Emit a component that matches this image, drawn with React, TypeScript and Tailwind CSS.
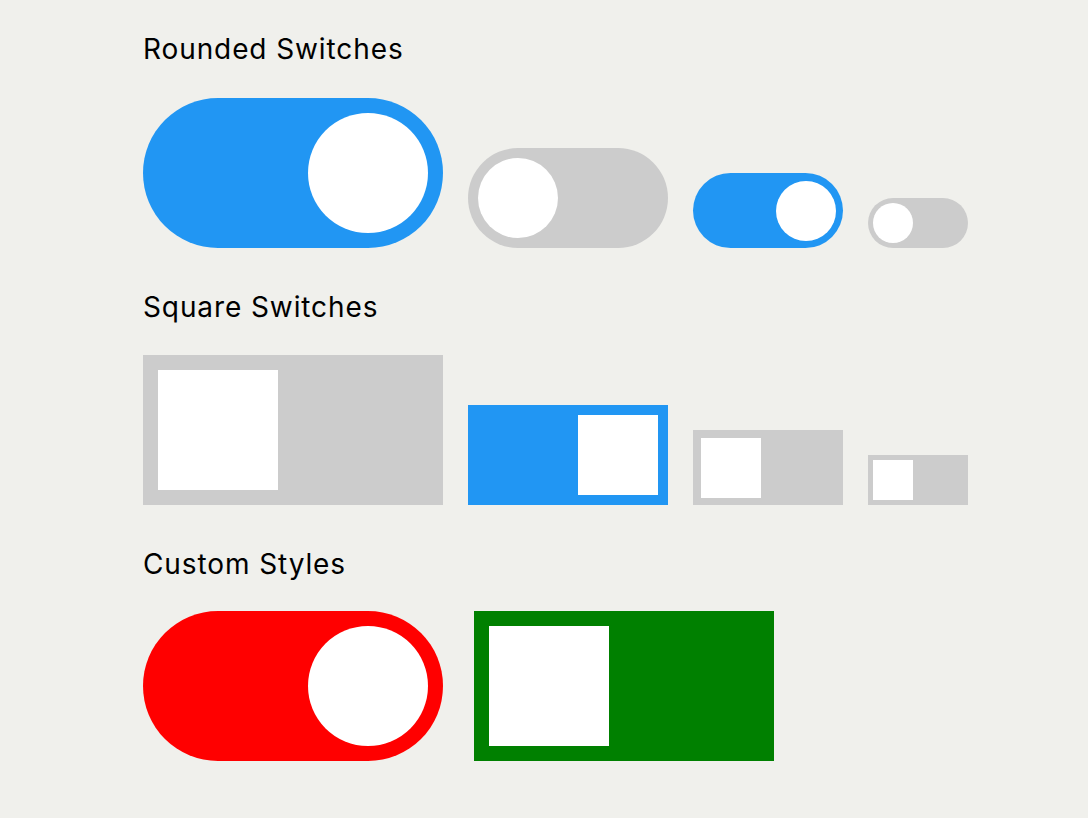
const sizes = {
  lg: { box: "w-[300px] h-[150px] p-[15px]", knob: "w-[120px] h-[120px]" },
  md: { box: "w-[200px] h-[100px] p-[10px]", knob: "w-[80px] h-[80px]" },
  sm: { box: "w-[150px] h-[75px] p-[7.5px]", knob: "w-[60px] h-[60px]" },
  xs: { box: "w-[100px] h-[50px] p-[5px]", knob: "w-[40px] h-[40px]" },
};

type Size = keyof typeof sizes;

function Switch({ size, on, rounded, color }: { size: Size; on: boolean; rounded: boolean; color: string }) {
  const s = sizes[size];
  return (
    <div className={`flex shrink-0 ${s.box} ${on ? "justify-end" : "justify-start"} ${rounded ? "rounded-full" : ""} ${color}`}>
      <div className={`${s.knob} bg-white ${rounded ? "rounded-full" : ""}`} />
    </div>
  );
}

export default function App() {
  return (
    <div className="min-h-[818px] bg-[#f0f0ec] pl-[143px] pt-[32px]" style={{ fontFamily: "Inter, sans-serif" }}>
      <h2 className="text-[28px] leading-[34px] tracking-[0.9px] text-black mb-[32px]">Rounded Switches</h2>
      <div className="flex items-end gap-[25px]">
        <Switch size="lg" on rounded color="bg-[#2196f3]" />
        <Switch size="md" on={false} rounded color="bg-[#cccccc]" />
        <Switch size="sm" on rounded color="bg-[#2196f3]" />
        <Switch size="xs" on={false} rounded color="bg-[#cccccc]" />
      </div>

      <h2 className="text-[28px] leading-[34px] tracking-[0.9px] text-black mt-[42px] mb-[31px]">Square Switches</h2>
      <div className="flex items-end gap-[25px]">
        <Switch size="lg" on={false} rounded={false} color="bg-[#cccccc]" />
        <Switch size="md" on rounded={false} color="bg-[#2196f3]" />
        <Switch size="sm" on={false} rounded={false} color="bg-[#cccccc]" />
        <Switch size="xs" on={false} rounded={false} color="bg-[#cccccc]" />
      </div>

      <h2 className="text-[28px] leading-[34px] tracking-[0.9px] text-black mt-[42px] mb-[30px]">Custom Styles</h2>
      <div className="flex items-end gap-[31px]">
        <Switch size="lg" on rounded color="bg-[#ff0000]" />
        <Switch size="lg" on={false} rounded={false} color="bg-[#008000]" />
      </div>
    </div>
  );
}
